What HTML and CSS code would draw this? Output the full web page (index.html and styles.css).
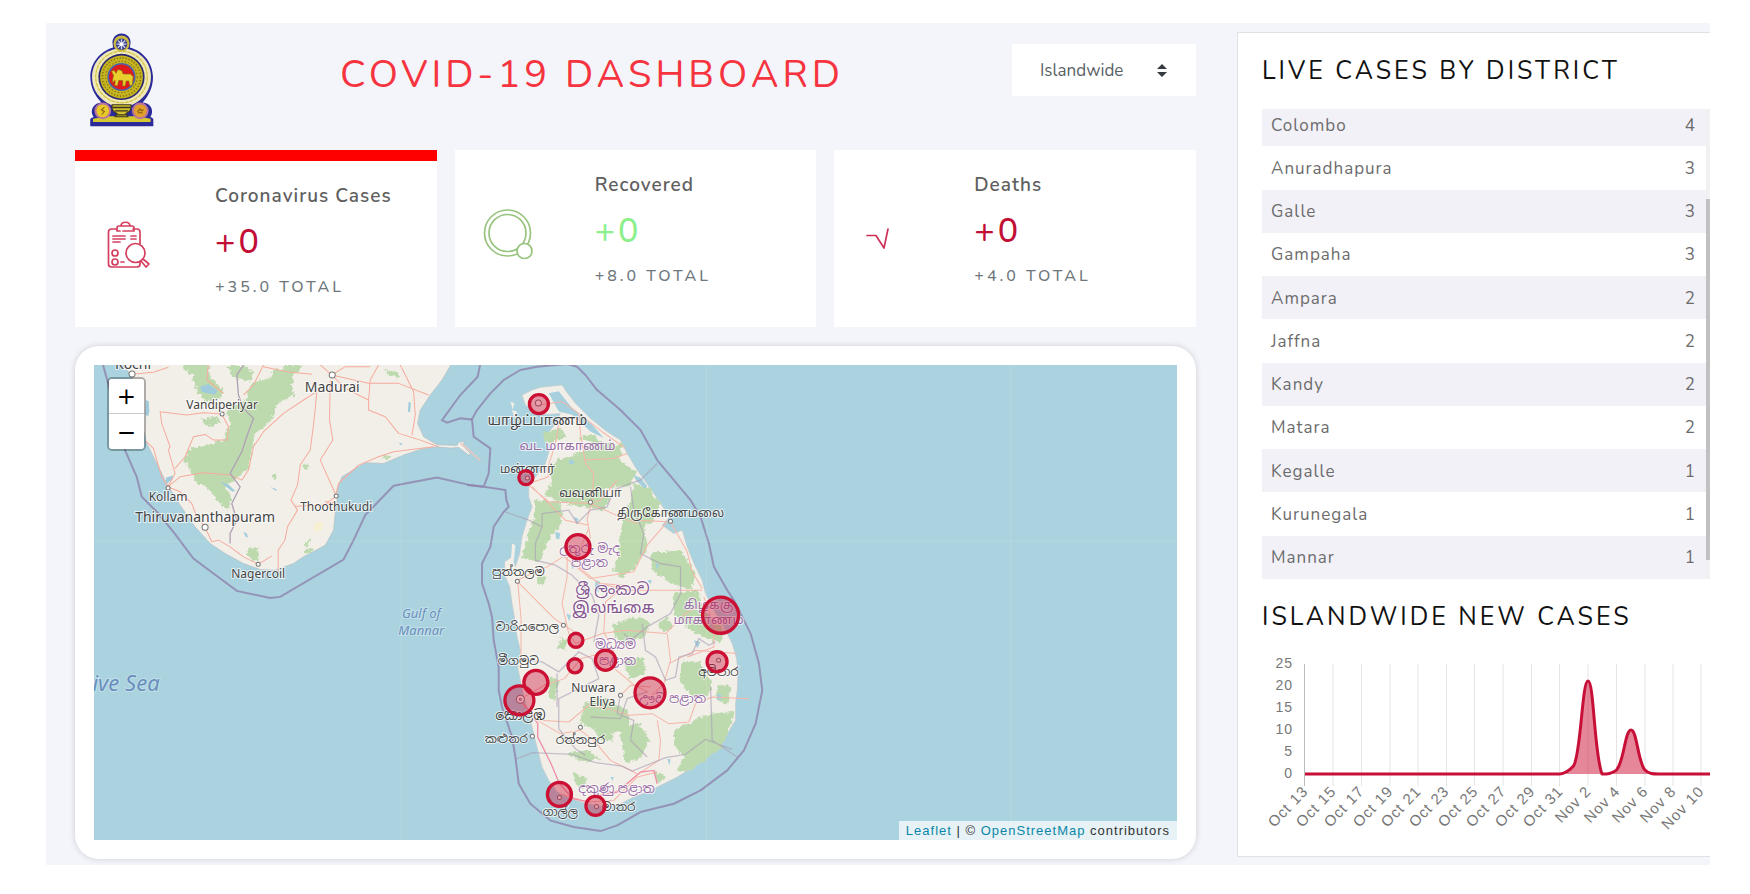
FILE: index.html
```
<!DOCTYPE html>
<html lang="en">
<head>
<meta charset="utf-8">
<title>COVID-19 Dashboard</title>
<link rel="stylesheet" href="styles.css">
</head>
<body>
<div class="app">
  <main class="main">
    <header class="header">
      <svg class="emblem" viewBox="15 24 200 280" role="img" aria-label="Emblem of Sri Lanka">
        <path d="M112 25c17 0 28 13 27 28l-2 14c40 10 69 47 69 88 0 32-13 56-31 76 14 1 26 9 28 23 1 8-1 14-5 20l9 6v22H19v-22l10-6c-5-6-7-13-5-21 3-13 14-21 28-22-20-21-33-45-33-76 0-41 29-77 68-88l-2-14c0-15 10-28 27-28z" fill="#2b2a9a"/>
        <path d="M112 70c-49 0-88 37-88 85 0 39 24 70 58 84h60c34-14 58-45 58-84 0-48-39-85-88-85z" fill="#efe8b8"/>
        <circle cx="112" cy="155" r="77" fill="none" stroke="#d6c64a" stroke-width="4" stroke-dasharray="12 2"/>
        <circle cx="112" cy="55" r="24" fill="#c9b93e"/><circle cx="112" cy="57" r="17" fill="#34398c"/>
        <path d="M112 42v30M97 57h30M101 46l22 22M123 46l-22 22" stroke="#cfd3e6" stroke-width="4"/>
        <circle cx="112" cy="57" r="5" fill="#fff"/>
        <circle cx="112" cy="155" r="69" fill="#2a2770"/><circle cx="112" cy="155" r="64" fill="#c6b51e"/>
        <circle cx="112" cy="155" r="57" fill="none" stroke="#8a7a18" stroke-width="5" stroke-dasharray="4 5"/>
        <circle cx="112" cy="155" r="47" fill="none" stroke="#857518" stroke-width="3" stroke-dasharray="5 5"/>
        <circle cx="112" cy="155" r="42" fill="#4b63ae"/><circle cx="112" cy="155" r="37" fill="#e01b1b"/>
        <path d="M84 172l4-22-6-12 8-3 6 9 5-11 12 3 4 10h22l8 8-3 26h-8l-2-13h-8l-3 15h-8l1-16-12-1-4 16h-8l1-16z" fill="#e8cf2e" stroke="#8a6a10" stroke-width="2"/>
        <path d="M20 282h186v17H20z" fill="#2b2a9a"/>
        <path d="M27 280l42-8h88l42 8v9H27z" fill="#d6c930"/>
        <circle cx="56" cy="256" r="25" fill="#b9769a"/><circle cx="56" cy="256" r="19" fill="#e9c926"/>
        <circle cx="168" cy="256" r="25" fill="#b9769a"/><circle cx="168" cy="256" r="19" fill="#e2a02a"/>
        <path d="M61 245l-9 8 9 5-8 9M160 259l7-9 4 6 7-3M161 262h14" fill="none" stroke="#7d5a14" stroke-width="3"/>
        <path d="M84 238h56v9c0 9-8 14-15 17l6 10H93l6-10c-8-3-15-8-15-17z" fill="#cfc02c" stroke="#3a3520" stroke-width="3"/>
        <path d="M86 246h52M92 256h40M96 268h32" stroke="#3a3520" stroke-width="4"/>
      </svg>
      <h1 class="title">COVID-19 DASHBOARD</h1>
      <div class="region">
        <select class="region-select" aria-label="Region"><option>Islandwide</option></select>
        <svg class="region-arrow" viewBox="0 0 10 13" aria-hidden="true"><path d="M5 0l5 5H0zM5 13L0 8h10z" fill="#343a40"/></svg>
      </div>
    </header>

    <section class="cards">
      <article class="card card-active">
        <svg class="card-icon" viewBox="0 0 52 52" fill="none" stroke="#d3405f" stroke-width="1.7" stroke-linecap="round" stroke-linejoin="round">
          <path d="M14 10H8.500q-3 0-3 3V45q0 3 3 3H34q3 0 3-3v-3M30 10h4q3 0 3 3v12"/>
          <path d="M14 12V9q0-2 2-2h2c0-5 9-5 9 0h2q2 0 2 2v3H20M18 7h9M17 12h-3"/>
          <path d="M10 17h12M10 20h12M10 23h7M28 17h5M28 20h5M18 43h3"/>
          <circle cx="12" cy="34" r="3"/><circle cx="12" cy="43" r="3"/><circle cx="32.500" cy="34" r="9.500" fill="#fff"/>
          <path d="M38 42l5 6 3-3-6-5"/>
        </svg>
        <div><h2 class="card-label">Coronavirus Cases</h2><p class="card-value red">+0</p><p class="card-total">+35.0 TOTAL</p></div>
      </article>
      <article class="card">
        <svg class="card-icon" viewBox="0 0 52 52" fill="none" stroke="#98c47f" stroke-width="1.700">
          <circle cx="24.500" cy="25" r="23"/><circle cx="24.500" cy="25" r="18.500"/><circle cx="41.500" cy="43" r="7.500" fill="#fff"/>
        </svg>
        <div><h2 class="card-label">Recovered</h2><p class="card-value green">+0</p><p class="card-total">+8.0 TOTAL</p></div>
      </article>
      <article class="card">
        <svg class="card-icon" viewBox="0 0 52 52" fill="none" stroke="#cf3158" stroke-width="1.700" stroke-linecap="round" stroke-linejoin="round"><path d="M5 27.500h9L22 40l4-19"/></svg>
        <div><h2 class="card-label">Deaths</h2><p class="card-value red">+0</p><p class="card-total">+4.0 TOTAL</p></div>
      </article>
    </section>

    <section class="map-card">
      <div class="map">
        <svg class="map-svg" viewBox="94 365 1082 475" role="img" aria-label="Map of cases in Sri Lanka">
          <defs>
            <filter id="rough" x="-5%" y="-5%" width="110%" height="110%"><feTurbulence type="fractalNoise" baseFrequency="0.080" numOctaves="4" seed="4"/><feDisplacementMap in="SourceGraphic" scale="20" xChannelSelector="R" yChannelSelector="G"/></filter>
            <filter id="edge" x="-5%" y="-5%" width="110%" height="110%"><feTurbulence type="fractalNoise" baseFrequency="0.100" numOctaves="2" seed="9"/><feDisplacementMap in="SourceGraphic" scale="3" xChannelSelector="R" yChannelSelector="G"/></filter>
          </defs>
          <path d="M94 365h1082v475H94z" fill="#aad3df"/>

          <g transform="translate(70 340) scale(.33333)">
            <path filter="url(#edge)" fill="#f2efe9" stroke="#b4bcc4" stroke-width="2" d="M150 60L185 110 205 200 228 305 265 380 290 430 330 495 375 560 420 610 465 640 520 670 570 688 615 690 670 670 700 650 765 615 790 570 795 520 800 490 802 445 815 410 885 368 940 370 1000 345 1060 325 1100 320 1140 324 1165 322 1195 345 1200 340 1178 318 1182 305 1165 306 1160 316 1100 314 1060 290 1042 250 1050 210 1080 165 1115 120 1150 60z"/>
            <g filter="url(#rough)" fill="#bddaae">
              <path d="M340 70h75l5 40 40 40-10 25-40 10-30-30-15-50-25-20z"/>
              <path d="M605 90l70-5-10 50 10 30-50 25-20 50-50 40-10 45-10 60-45 40-40 25-70-20-20-45-20-25 20-35 60-10 45-20 15-50-10-30 20-20 35-15 20-50 60-20z"/>
              <path d="M405 410l45 15 35 40-10 45-35-30-25-30z"/><path d="M535 620l30 5v40l-20-5-15-20z"/>
              <path d="M470 75l60 5 20 20-10 25-50-15zM395 235l45-5 10 20-45 10zM360 340l15 5-5 18-13-6zM700 370l15 5-3 15-13-8zM608 402l12 2-2 14-10-4zM940 90l40 5 10 15-30-2zM705 605l18-6-3 15-15 5zM700 630l25-6 14 4-35 14zM640 75h60l-20 25-40-5z"/>
              <path d="M940 350l25-4-10 12-20 2z"/>
            </g>
            <g filter="url(#edge)" fill="#9fcbdc"><path d="M390 140l25-8 28 20-10 12-38-8zM228 180l8 4 2 30-4 15-8-6zM288 412l22-6-4 12-18 14zM1015 185l7 4-3 28-6-3zM450 425l25 8 20 20-8 2zM520 575l10 5 4 12-8-3zM600 440l20 8-2 5zM985 308l12 2-4 6z"/></g>
            <path d="M740 545l20 3-4 22-22 6-4-18z" fill="#f8efc8" opacity=".7"/>
            <g fill="none" stroke="#f6ab9c" stroke-width="3" stroke-linejoin="round" filter="url(#edge)">
              <path d="M187 103L250 97 295 82M270 215L350 225 400 218 455 222 475 260 472 300 430 300 405 283 370 290 345 350 315 385M270 215L275 250 300 320 295 330 315 400 293 440M228 303L250 325 275 410 293 440 330 455 365 490 380 530 405 562 425 605 445 600 480 620 520 650 565 672M293 440L330 410 400 398 480 405 515 420 535 390 550 320 580 275 640 220 700 180 740 155"/>
              <path d="M415 70l-5 50 50 40M580 75l-30 60-30 30M580 80l70 15 75 8M745 70l40 35 40-25h75M785 105l110 25h90l90 35M785 105l40 40 70 35v30l50 20 40 50 50 15 70 25M895 180l5-60 25-45M990 75l40 80 5 70-10 60"/>
              <path d="M740 155l-10 100-10 75-30 45-8 60-20 45 20 30-30 50-8 40-20 30v70M780 120l-2 120 10 60-38 60 45 100M795 470l-20 15-10 0 35 5M795 485l-45 10-75 3M795 470l10-40 60-55 60-25 45-15 120-15M565 672l40-25"/>
            </g>
            <path filter="url(#edge)" fill="none" stroke="#b0a2b4" stroke-width="4" d="M520 75l-20 30 5 60 15 40 30 30-15 40-20 60-35 65 30 40-25 50 15 50-20 40v30"/>
            <g fill="none" stroke="#8f83ac" stroke-width="6" stroke-opacity=".8">
              <path d="M95 60L120 150 165 330 200 410 215 470 260 515 310 575 370 655 500 752 600 773 630 770 820 658 850 600 885 525 970 437 1100 412 1200 435 1240 440"/>
              <path d="M1232 60L1222 110 1170 165 1115 240 1130 248 1170 235 1205 238"/>
            </g>
          </g>

          <g transform="translate(460 350) scale(.33333)">
            <path d="M0 280l15 10 45 42" fill="none" stroke="#ecc8bf" stroke-width="5"/>
            <path filter="url(#edge)" fill="#f2efe9" stroke="#c3c9cc" stroke-width="2" d="M305 105L318 125 345 160 390 205 440 245 480 270 500 310 530 360 570 415 600 460 628 500 605 525 640 550 665 540 680 590 700 640 725 690 735 730 760 780 790 830 815 880 828 925 832 970 830 1020 825 1060 825 1110 800 1150 780 1190 740 1220 690 1255 650 1280 600 1305 560 1325 520 1340 480 1360 430 1370 380 1360 330 1345 290 1325 265 1290 245 1250 232 1200 220 1150 205 1090 190 1040 180 990 172 950 180 900 170 860 162 800 155 760 148 710 135 680 132 635 155 620 165 650 178 610 185 560 200 510 215 470 205 440 205 400 230 375 255 340 270 290 250 265 270 240 290 215 300 190 240 195 195 165 185 135 215 120 240 112z"/>
            <path filter="url(#edge)" fill="#f2efe9" d="M150 155l12 5-5 18zM155 180l15 5-8 18zM155 580l10 5-5 50-8-10z"/>
            <g filter="url(#rough)" fill="#bddaae">
              <path d="M250 245l55-10 10 25-45 20-20-10zM350 265l45-10 30 20 60 10-5 50 50 30-20 40-70 10-40 60-60-10-40-10-50-20 25-40-10-50 40-20 60-20 30-30z"/>
              <path d="M225 450l75 5 5 60-50 70-15 50-55-10 15-60 20-60z"/>
              <path d="M520 400l40 10 40 50-20 50-30 20 10 60-35 60-40 30-25-15 15-70 10-80 20-50z"/>
              <path d="M570 610l90-10 45 70-10 50-60-20-60-40zM640 730l70-10 20 60 60 60-10 40-80-30-60-60z"/>
              <path d="M460 820l80-20 30 20-20 40-50 20-40-20zM490 930l60-10 5 50-50 15zM590 820l30-20 15 30-25 20zM370 1060l60-20 70 40 10 50-60 20-90-30z"/>
              <path d="M665 930l50 5 40 60-10 40-50 5-40-50zM770 1000l40 10-10 50-30-10z"/>
              <path d="M645 1135l100-45 75-5-20 70-20 40-100 70-30-5 20-40-30-40z"/>
              <path d="M475 1130l60-10 30 50-20 50-50 20zM390 1110l50 20 20 40-50 0zM320 1210l60-10 40 25-50 10zM340 1265l40 20-10 30-30-20zM265 980l30 10-10 60-20-10zM390 430l60 10-20 40-40-10zM230 670l25 10-5 30-20-10zM580 1260l40 20-30 20zM300 860l20 10-5 30-20-10z"/>
            </g>
            <g filter="url(#edge)" fill="#a6d0de"><path d="M265 130l30-6 40 50 60 50 35 40-40-20-55-50-40-10zM325 330l15 0 0 12-14 0zM285 545l15 4-4 20-10-5zM340 500l14 6-4 16zM405 690l14 5-4 30-12-4zM330 640l15 4-8 14zM520 375l20 8 20 25-8 8-25-25zM740 790l12 10 10 40-12-10zM700 870l20 5-10 20zM770 1030l14 4-4 16-12-4zM620 1225l10 2-3 18zM450 1280l10 0-4 12zM560 690l14 0-4 12zM318 790l14 6-6 18zM585 640l12 4-8 14z"/></g>
            <g fill="none" stroke="#f6b5a8" stroke-width="3" stroke-linejoin="round" filter="url(#edge)">
              <path d="M235 165l70-10 30 20 90 70 70 50M295 220l-10 60-25 80 5 20-60 20M355 190l5 60 15 90 25 30-5 85-15 50 10 60M370 330l90-5 40-15M205 405l60 50 125 5M215 410l100 100 70 15M390 460l110 50 30 10M390 460l30-10 50-60M530 510l90 5-60 70-40 80-130 20-90-75M630 515l50 90 15 60 30 50"/>
              <path d="M170 690l90-40 55-35 40-10 30-70M172 695l110 110 60 40M172 695l10 110 0 150M320 620l0 60-15 80 20 90 20 30M355 650l60 50 80 5-60 50-5 90 30 60M415 700l90 20 220 0M345 880l80-30 70-10 120 10 60-60 50-30M730 740l30 90 0 60-80 30M620 850l10 80-20 70-40 40M625 940l80-40 125 10"/>
              <path d="M182 1045l70-40 60-20 50-60 40-10 60 40 60 50 40 20M185 1060l50 50 90 5 60-50 60 10 60 20 70-5 50 30 60-5 20-55 50-20 110 5M230 1110l70 40 60-10 40 30 50 60 80 40M590 1110l10 60-5 60-60 40-60 50-80 20M480 1035l30-30 60 5M300 1330l80 25 80-5 70-70 60-15"/>
            </g>
            <path d="M182 1050l50 70 0 40 40 80 25 60 40 45 50 10M400 1340l70-15 70-60 40-5 10 40" fill="none" stroke="#ee8fa8" stroke-width="4"/>
            <g fill="none" stroke="#a99db4" stroke-width="4" stroke-opacity=".6" filter="url(#edge)">
              <path d="M135 485l70 25 40 20 0-40 80-10 25 40 40-40 50-10 20-50 50-20 30-10 50-50M245 530l-20 50 0 50 60 15 50 30 60 60 20 60-15 80M510 410l10 70 30 70-10 60 60 30 60 10 0 80-30 60-70 40-50 40-20-20M545 820l10 80 30 20 30 70 30-10 10-60 40-10 20-45 30 20 20-10M175 925l70 10 50 30 60-60 40 20 20 60-120 60 0 90 50 60 30 20M290 970l0 100M390 1100l90 5 20-60 60-20M480 1030l-10 60 50 20-10 60 50 50M165 1227l50-20 120 5 70 25 80 10 30 15 100-40 60-10 60-45 80 30M750 1010l5 160 75 50"/>
            </g>
            <path fill="none" stroke="#8f83ac" stroke-width="6" stroke-opacity=".8" stroke-linejoin="round" d="M30 207L35 208 40 260 90 295 85 370 70 410 135 420 138 450 145 470 130 485 100 530 90 590 65 640 65 700 85 760 95 800 100 870 115 950 115 1020 125 1070 155 1160 165 1220 175 1300 210 1360 270 1410 340 1430 420 1442 470 1425 540 1385 640 1360 720 1320 800 1260 850 1200 885 1120 905 1020 895 940 870 850 820 750 800 720 760 650 745 580 720 500 690 450 640 390 590 330 540 240 480 180 410 120 375 75 350 50 320 42 230 50 180 60 130 90 90 130 50 180 35 208M20 405L70 410"/>
          </g>
          <path d="M94 541h1082M401 365v475M706 365v475M1010 365v475" stroke="#fff" stroke-opacity=".12"/>

          <g fill="#fff" stroke="#777" stroke-width="1">
            <circle cx="132" cy="374" r="3"/><circle cx="332" cy="375" r="3"/><circle cx="222" cy="414" r="2"/><circle cx="168" cy="488" r="2"/><circle cx="205" cy="527" r="3"/><circle cx="336" cy="496" r="2"/><circle cx="258" cy="564" r="2"/>
            <circle cx="538" cy="403" r="3"/><circle cx="527" cy="478" r="2"/><circle cx="590" cy="502" r="2"/><circle cx="670" cy="521" r="2"/><circle cx="517" cy="581" r="2"/><circle cx="563" cy="625" r="2"/><circle cx="620" cy="695" r="2"/><circle cx="580" cy="727" r="2"/><circle cx="532" cy="736" r="2"/><circle cx="718" cy="660" r="2"/><circle cx="520" cy="699" r="4"/><circle cx="520" cy="699" r="1"/><circle cx="559" cy="797" r="2"/><circle cx="596" cy="806" r="2"/>
          </g>
          <g class="place">
            <text class="city" x="133" y="369">Kochi</text><text class="city" x="332" y="392">Madurai</text><text class="city" x="205" y="522">Thiruvananthapuram</text>
            <text x="222" y="409">Vandiperiyar</text><text x="168" y="501">Kollam</text><text x="336" y="511">Thoothukudi</text><text x="258" y="578">Nagercoil</text>
            <text class="city" x="537" y="425">யாழ்ப்பாணம்</text><text x="527" y="473">மன்னார்</text><text x="590" y="497">வவுனியா</text><text x="670" y="517">திருகோணமலை</text>
            <text x="518" y="576">පුත්තලම</text><text x="527" y="631">වාරියපොල</text><text x="518" y="665">මීගමුව</text><text x="718" y="676">අම්පාර</text>
            <text x="593" y="692">Nuwara</text><text x="602" y="706">Eliya</text>
            <text class="city" x="520" y="720">කොළඹ</text><text x="506" y="743">කළුතර</text><text x="580" y="744">රත්නපුර</text><text x="560" y="816">ගාල්ල</text><text x="618" y="811">මාතර</text>
          </g>
          <g class="place province">
            <text x="567" y="450">வட மாகாணம்</text><text x="589" y="553">උතුරු මැද</text><text x="589" y="567">පළාත</text>
            <text class="country" x="612" y="595">ශ්‍රී ලංකාව</text><text class="country" x="613" y="613">இலங்கை</text>
            <text x="708" y="609">கிழக்கு</text><text x="708" y="624">மாகாணம்</text>
            <text x="615" y="649">මධ්‍යම</text><text x="617" y="665">පළාත</text><text x="672" y="703">ඌව පළාත</text><text x="616" y="793">දකුණු පළාත</text>
          </g>
          <g class="place sea"><text x="421" y="618">Gulf of</text><text x="421" y="635">Mannar</text><text class="ocean" x="126" y="691">ive Sea</text></g>

          <g fill="#cc1034" fill-opacity=".4" stroke="#cc1034" stroke-width="3.3">
            <circle cx="538.500" cy="404" r="9.500"/><circle cx="525.500" cy="477.500" r="7"/><circle cx="577.500" cy="546.500" r="12"/><circle cx="720" cy="615" r="18"/><circle cx="575.500" cy="640" r="7"/><circle cx="574.500" cy="665.500" r="7"/><circle cx="605" cy="660" r="10"/><circle cx="716.500" cy="661.500" r="10"/><circle cx="649.500" cy="692.500" r="15"/><circle cx="535.500" cy="682" r="12"/><circle cx="519" cy="700" r="14.500"/><circle cx="559" cy="794" r="12"/><circle cx="595" cy="805.500" r="9.500"/>
          </g>
        </svg>
        <div class="zoom"><button type="button" aria-label="Zoom in">+</button><button type="button" aria-label="Zoom out">−</button></div>
        <div class="attribution"><a href="#leaflet">Leaflet</a> | © <a href="#osm">OpenStreetMap</a> contributors</div>
      </div>
    </section>
  </main>

  <aside class="panel">
    <h2 class="panel-title">LIVE CASES BY DISTRICT</h2>
    <div class="table-box">
      <div class="table-clip">
        <table class="districts" aria-label="Live cases by district">
          <tbody>
            <tr><th scope="row">Colombo</th><td>4</td></tr>
            <tr><th scope="row">Anuradhapura</th><td>3</td></tr>
            <tr><th scope="row">Galle</th><td>3</td></tr>
            <tr><th scope="row">Gampaha</th><td>3</td></tr>
            <tr><th scope="row">Ampara</th><td>2</td></tr>
            <tr><th scope="row">Jaffna</th><td>2</td></tr>
            <tr><th scope="row">Kandy</th><td>2</td></tr>
            <tr><th scope="row">Matara</th><td>2</td></tr>
            <tr><th scope="row">Kegalle</th><td>1</td></tr>
            <tr><th scope="row">Kurunegala</th><td>1</td></tr>
            <tr><th scope="row">Mannar</th><td>1</td></tr>
          </tbody>
        </table>
      </div>
      <div class="track"><div class="thumb"></div></div>
    </div>
    <h2 class="panel-title">ISLANDWIDE NEW CASES</h2>
    <svg class="chart" viewBox="1262 650 448 190" role="img" aria-label="Islandwide new cases, Oct 13 to Nov 10">
      <path stroke="#e4e4e4" fill="none" d="M1333 663v122M1361.500 663v122M1390 663v122M1418 663v122M1446.500 663v122M1474.500 663v122M1503 663v122M1531.500 663v122M1559.500 663v122M1588 663v122M1616.500 663v122M1645 663v122M1673 663v122M1701 663v122"/>
      <path stroke="#bdbdbd" d="M1304.500 663v122"/>
      <path fill="#cc1034" fill-opacity=".5" stroke="#c70f38" stroke-width="3" stroke-linejoin="round" d="M1305 773H1559.500C1564 773 1570 769 1573.500 765C1581 754 1582 680 1588 680C1594 680 1594 752 1602 773C1607 773 1612 773 1616.500 769C1624 761 1625 729 1631 729C1637 729 1638 762 1645 769C1649 773 1653 773 1659 773H1714"/>
      <g class="axis"><text x="1293" y="667">25</text><text x="1293" y="689">20</text><text x="1293" y="711">15</text><text x="1293" y="733">10</text><text x="1293" y="755">5</text><text x="1293" y="777">0</text></g>
      <g class="axis axis-x">
        <text transform="translate(1309 791) rotate(-46)">Oct 13</text><text transform="translate(1337 791) rotate(-46)">Oct 15</text><text transform="translate(1365 791) rotate(-46)">Oct 17</text><text transform="translate(1394 791) rotate(-46)">Oct 19</text><text transform="translate(1422 791) rotate(-46)">Oct 21</text><text transform="translate(1450 791) rotate(-46)">Oct 23</text><text transform="translate(1479 791) rotate(-46)">Oct 25</text><text transform="translate(1507 791) rotate(-46)">Oct 27</text><text transform="translate(1536 791) rotate(-46)">Oct 29</text><text transform="translate(1564 791) rotate(-46)">Oct 31</text><text transform="translate(1592 791) rotate(-46)">Nov 2</text><text transform="translate(1621 791) rotate(-46)">Nov 4</text><text transform="translate(1649 791) rotate(-46)">Nov 6</text><text transform="translate(1677 791) rotate(-46)">Nov 8</text><text transform="translate(1705 791) rotate(-46)">Nov 10</text>
      </g>
    </svg>
  </aside>
</div>
</body>
</html>
```
FILE: styles.css
```
* { box-sizing: border-box; }
body {
  margin: 0;
  padding: 23px 40px 29px 46px;
  background: #fff;
  font-family: Nunito, Lato, "Noto Sans", sans-serif;
  color: #6c6c6c;
}
h1, h2, p { margin: 0; font-weight: 400; }
.app {
  display: grid;
  grid-template-columns: minmax(0, 1121fr) minmax(0, 473fr);
  gap: 41px;
  padding-left: 29px;
  background: #f4f5fa;
}
.main { padding-bottom: 6px; }
.header { display: flex; align-items: flex-start; padding: 10px 0 0 14px; height: 127px; }
.emblem { width: 67px; height: 94px; flex: none; }
.title {
  flex: 1;
  padding: 18px 0 0 16px;
  text-align: center;
  font-size: 38px;
  line-height: 48px;
  letter-spacing: 4px;
  color: #f6343f;
}
.region { position: relative; width: 184px; margin-top: 11px; }
.region-select {
  width: 100%;
  height: 52px;
  padding: 0 28px;
  border: 0;
  border-radius: 0;
  appearance: none;
  background: #fff;
  font: inherit;
  font-size: 17px;
  color: #5a5f65;
}
.region-arrow { position: absolute; right: 29px; top: 20px; width: 10px; height: 13px; pointer-events: none; }

.cards { display: grid; grid-template-columns: repeat(3, 1fr); gap: 18px; }
.card {
  display: grid;
  grid-template-columns: 52px 1fr;
  column-gap: 60px;
  align-items: start;
  padding: 21px 0 30px 28px;
  background: #fff;
}
.card-active { border-top: 11px solid #f00; }
.card-icon { width: 52px; height: 52px; margin-top: 37px; }
.card-label { font-size: 19px; line-height: 28px; font-weight: 600; letter-spacing: 1px; color: #606060; }
.card-value { margin: 13px 0 16px; font-size: 34px; line-height: 38px; font-weight: 500; letter-spacing: 3px; }
.card-total { font-size: 16px; line-height: 20px; font-weight: 500; letter-spacing: 3px; color: #6f777d; }
.red { color: #c20e35; }
.green { color: #8cf08c; }

.map-card {
  margin-top: 19px;
  padding: 19px;
  border-radius: 24px;
  background: #fff;
  box-shadow: 0 0 6px rgba(0, 0, 0, .16);
}
.map { position: relative; }
.map-svg { display: block; width: 100%; height: auto; }
.place text {
  font-family: "Noto Sans", "Noto Sans Tamil", "Noto Sans Sinhala", sans-serif;
  font-size: 12px;
  text-anchor: middle;
  fill: #444;
  stroke: #fff;
  stroke-opacity: .7;
  stroke-width: 2px;
  paint-order: stroke;
}
.place .city { font-size: 14px; }
.province text { fill: #9a6fa8; font-size: 13px; }
.province .country { font-size: 16px; fill: #84548f; }
.sea text { fill: #6a8fbd; font-style: italic; font-size: 13px; stroke-opacity: .3; }
.sea .ocean { font-size: 22px; }
.zoom {
  position: absolute;
  left: 13px;
  top: 12px;
  display: grid;
  width: 39px;
  border: 2px solid rgba(0, 0, 0, .28);
  border-radius: 5px;
  background-clip: padding-box;
}
.zoom button {
  height: 35px;
  padding: 0;
  border: 0;
  background: #fff;
  font: 23px/32px "DejaVu Sans", sans-serif;
  color: #000;
}
.zoom button:first-child { border-bottom: 1px solid #ccc; border-radius: 3px 3px 0 0; }
.zoom button:last-child { border-radius: 0 0 3px 3px; }
.attribution {
  position: absolute;
  right: 0;
  bottom: 0;
  padding: 0 7px;
  background: rgba(255, 255, 255, .7);
  font: 13px/19px "Liberation Sans", sans-serif;
  letter-spacing: 1px;
  color: #333;
}
.attribution a { color: #0b86a8; text-decoration: none; }

.panel {
  margin: 9px 0 8px;
  padding: 24px 0 10px 24px;
  border: 1px solid #dfe1e3;
  border-right: 0;
  background: #fff;
}
.panel-title { font-size: 25px; line-height: 28px; letter-spacing: 3px; color: #111; }
.table-box { display: grid; grid-template-columns: 1fr 4px; margin: 24px 0; }
.table-clip { height: 470px; overflow: hidden; }
.districts { width: 100%; height: 476px; margin-top: -6px; border-collapse: collapse; }
.districts th, .districts td { padding: 1px 9px 0; font-size: 17px; font-weight: 400; letter-spacing: 1px; text-align: left; }
.districts td { padding-right: 10px; text-align: right; }
.districts tr:nth-child(odd) { background: #f2f1f8; }
.track { padding-top: 90px; background: #f1f1f1; }
.thumb { height: 361px; background: #c1c1c1; }
.chart { display: block; width: 100%; height: auto; margin-top: 20px; }
.axis text { font: 14px "Liberation Sans", sans-serif; letter-spacing: 1px; fill: #777; text-anchor: end; }
.axis-x text { font-size: 15px; }
```
